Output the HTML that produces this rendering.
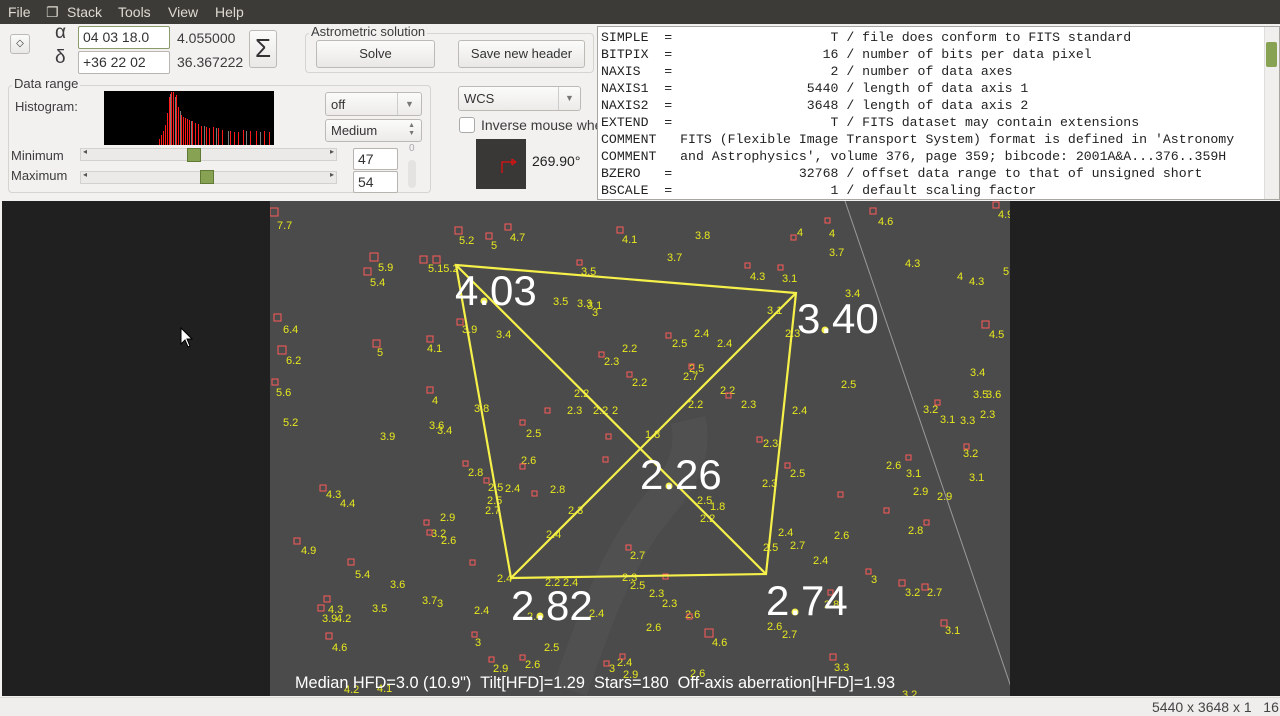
<!DOCTYPE html>
<html><head><meta charset="utf-8"><style>
*{margin:0;padding:0;box-sizing:border-box}
body{width:1280px;height:716px;overflow:hidden;background:#f2f1f0;font-family:"Liberation Sans","DejaVu Sans",sans-serif;font-size:13px;color:#3c3c3c;position:relative}
.a{position:absolute}
.menu{left:0;top:0;width:1280px;height:24px;background:#3c3b37;color:#dfdbd2;font-size:14px}
.menu span{position:absolute;top:4px}
.inp{background:#fff;border:1px solid #b8b5b0;border-radius:2px;font-size:14px;padding:2px 4px;color:#333}
.btn{background:linear-gradient(#fbfbfa,#e9e8e6);border:1px solid #bdbab5;border-radius:3px;text-align:center;font-size:13px;color:#333}
.frame{border:1px solid #d6d4d1;border-radius:4px}
.combo{background:linear-gradient(#fbfbfa,#ecebe9);border:1px solid #bdbab5;border-radius:3px;font-size:13px;padding:4px 5px;color:#333}
.slider{background:#ebeae8;border:1px solid #d3d1ce;height:13px}
.slider:before{content:"◂";position:absolute;left:2px;top:-2px;font-size:8px;color:#555}
.slider:after{content:"▸";position:absolute;right:2px;top:-2px;font-size:8px;color:#555}
.handle{background:#87a252;border:1px solid #5e7a34;width:14px;height:14px}
.fits{left:597px;top:26px;width:683px;height:174px;background:#fff;border:1px solid #a9a6a1;font-family:"Liberation Mono","DejaVu Sans Mono",monospace;font-size:13.2px;line-height:17px;white-space:pre;color:#222;padding:2px 0 0 3px;overflow:hidden}
</style></head><body>
<div class="a menu"><span style="left:8px">File</span><span style="left:46px">&#x2750;</span><span style="left:67px">Stack</span><span style="left:118px">Tools</span><span style="left:168px">View</span><span style="left:215px">Help</span></div>

<div class="a btn" style="left:10px;top:34px;width:20px;height:20px;font-size:10px;line-height:18px">&#x25C7;</div>
<div class="a" style="left:55px;top:22px;font-size:19px">α</div>
<div class="a" style="left:55px;top:47px;font-size:19px">δ</div>
<div class="a inp" style="left:78px;top:26px;width:92px;height:23px;border-color:#8a9c6a">04 03  18.0</div>
<div class="a inp" style="left:78px;top:51px;width:92px;height:23px">+36 22  02</div>
<div class="a" style="left:177px;top:30px;font-size:14px">4.055000</div>
<div class="a" style="left:177px;top:54px;font-size:14px">36.367222</div>
<div class="a btn" style="left:249px;top:30px;width:28px;height:38px;font-size:26px;line-height:34px">Σ</div>

<div class="a frame" style="left:305px;top:33px;width:289px;height:40px"></div>
<div class="a" style="left:309px;top:24px;background:#f2f1f0;padding:0 2px">Astrometric solution</div>
<div class="a btn" style="left:316px;top:40px;width:119px;height:28px;line-height:26px">Solve</div>
<div class="a btn" style="left:458px;top:40px;width:127px;height:28px;line-height:26px">Save new header</div>

<div class="a frame" style="left:8px;top:85px;width:423px;height:108px"></div>
<div class="a" style="left:12px;top:76px;background:#f2f1f0;padding:0 2px">Data range</div>
<div class="a" style="left:15px;top:99px">Histogram:</div>
<svg class="a" style="left:104px;top:91px" width="170" height="54" viewBox="0 0 170 54">
<rect width="170" height="54" fill="#000"/>
<g stroke="#ff1a1a" stroke-width="1">
<path d="M55.5 54V48M57.5 54V44M59.5 54V40M61.5 54V34M63.5 54V22M65.5 54V6M67.5 54V1M69.5 54V1M72.5 54V4M74.5 54V16M77.5 54V24M79.5 54V26M81.5 54V27M83.5 54V28M85.5 54V29M88.5 54V30M91.5 54V32M94.5 54V33M97.5 54V35M102.5 54V36M105.5 54V37M109.5 54V36M114.5 54V37M118.5 54V39M126.5 54V40M130.5 54V41M134.5 54V41M139.5 54V39M146.5 54V40M152.5 54V40M160.5 54V40M165.5 54V41"/>
</g>
<g stroke="#999" stroke-width="0.8"><path d="M66.5 54V3M71.5 54V6M76.5 54V20M87.5 54V30M100.5 54V35M112.5 54V37M124.5 54V40M142.5 54V40M156.5 54V41"/></g>
</svg>
<div class="a combo" style="left:325px;top:92px;width:97px;height:24px">off<span style="position:absolute;right:0;top:0;width:24px;height:22px;border-left:1px solid #ccc;text-align:center;font-size:9px;line-height:22px;color:#777">▼</span></div>
<div class="a combo" style="left:325px;top:119px;width:97px;height:23px;padding-top:3px">Medium<span style="position:absolute;right:6px;top:2px;font-size:7px;line-height:8px;color:#777">▲<br>▼</span></div>
<div class="a" style="left:11px;top:148px">Minimum</div>
<div class="a" style="left:11px;top:168px">Maximum</div>
<div class="a slider" style="left:80px;top:148px;width:257px"></div>
<div class="a slider" style="left:80px;top:171px;width:257px"></div>
<div class="a handle" style="left:187px;top:148px"></div>
<div class="a handle" style="left:200px;top:170px"></div>
<div class="a inp" style="left:353px;top:148px;width:45px;height:22px">47</div>
<div class="a inp" style="left:353px;top:171px;width:45px;height:22px">54</div>
<div class="a" style="left:409px;top:143px;font-size:10px;color:#aaa">0</div>
<div class="a" style="left:408px;top:160px;width:8px;height:28px;background:#e4e3e1;border-radius:4px"></div>

<div class="a combo" style="left:458px;top:86px;width:123px;height:25px">WCS<span style="position:absolute;right:0;top:0;width:22px;height:23px;border-left:1px solid #ccc;text-align:center;font-size:9px;line-height:23px;color:#777">▼</span></div>
<div class="a" style="left:459px;top:117px;width:16px;height:16px;background:#fff;border:1px solid #aaa;border-radius:3px"></div>
<div class="a" style="left:481px;top:117px;font-size:14px;width:116px;overflow:hidden;white-space:nowrap">Inverse mouse wheel</div>
<svg class="a" style="left:476px;top:139px" width="50" height="50"><rect width="50" height="50" fill="#3a3836"/><path d="M26 34V23H40M36 20V26" stroke="#e01010" stroke-width="1.3" fill="none"/><path d="M36 20L40 23L36 26" stroke="#e01010" fill="none"/></svg>
<div class="a" style="left:532px;top:153px;font-size:14px;color:#222">269.90°</div>

<div class="a fits">SIMPLE  =                    T / file does conform to FITS standard
BITPIX  =                   16 / number of bits per data pixel
NAXIS   =                    2 / number of data axes
NAXIS1  =                 5440 / length of data axis 1
NAXIS2  =                 3648 / length of data axis 2
EXTEND  =                    T / FITS dataset may contain extensions
COMMENT   FITS (Flexible Image Transport System) format is defined in 'Astronomy
COMMENT   and Astrophysics', volume 376, page 359; bibcode: 2001A&amp;A...376..359H
BZERO   =                32768 / offset data range to that of unsigned short
BSCALE  =                    1 / default scaling factor</div>
<div class="a" style="left:1264px;top:27px;width:15px;height:172px;background:#f0efed;border-left:1px solid #ddd"></div>
<div class="a" style="left:1266px;top:42px;width:11px;height:25px;background:#87a252;border-radius:2px"></div>

<div class="a" style="left:0;top:200px;width:1280px;height:497px;background:#f2f1f0"></div>
<div class="a" style="left:2px;top:201px;width:1278px;height:495px;background:#202020"></div>
<svg class="a" style="left:270px;top:201px" width="740" height="495" viewBox="270 201 740 495" font-family="Liberation Sans, DejaVu Sans, sans-serif">
<rect x="270" y="201" width="740" height="495" fill="#4b4b4b"/>
<path d="M570 690C595 620 615 560 655 510C685 475 695 450 688 420" stroke="#555" stroke-width="35" fill="none" opacity="0.5"/>
<path d="M845 201L1012 690" stroke="#9a9a9a" stroke-width="1"/>
<g fill="#e8e81e" font-size="11">
<text x="277" y="229">7.7</text><text x="459" y="244">5.2</text><text x="491" y="249">5</text><text x="510" y="241">4.7</text><text x="622" y="243">4.1</text><text x="695" y="239">3.8</text><text x="797" y="236">4</text><text x="829" y="237">4</text><text x="878" y="225">4.6</text><text x="998" y="218">4.9</text><text x="667" y="261">3.7</text><text x="829" y="256">3.7</text><text x="378" y="271">5.9</text><text x="370" y="286">5.4</text><text x="428" y="272">5.15.2</text><text x="581" y="275">3.5</text><text x="750" y="280">4.3</text><text x="782" y="282">3.1</text><text x="905" y="267">4.3</text><text x="957" y="280">4</text><text x="969" y="285">4.3</text><text x="1003" y="275">5</text><text x="845" y="297">3.4</text><text x="553" y="305">3.5</text><text x="577" y="307">3.3</text><text x="587" y="309">3.1</text><text x="592" y="316">3</text><text x="767" y="314">3.1</text><text x="283" y="333">6.4</text><text x="462" y="333">3.9</text><text x="496" y="338">3.4</text><text x="694" y="337">2.4</text><text x="717" y="347">2.4</text><text x="785" y="337">2.3</text><text x="989" y="338">4.5</text><text x="427" y="352">4.1</text><text x="377" y="356">5</text><text x="286" y="364">6.2</text><text x="604" y="365">2.3</text><text x="622" y="352">2.2</text><text x="672" y="347">2.5</text><text x="689" y="372">2.5</text><text x="683" y="380">2.7</text><text x="632" y="386">2.2</text><text x="720" y="394">2.2</text><text x="741" y="408">2.3</text><text x="841" y="388">2.5</text><text x="276" y="396">5.6</text><text x="432" y="404">4</text><text x="970" y="376">3.4</text><text x="986" y="398">3.6</text><text x="973" y="398">3.5</text><text x="574" y="397">2.2</text><text x="567" y="414">2.3</text><text x="593" y="414">2.2</text><text x="612" y="414">2</text><text x="688" y="408">2.2</text><text x="792" y="414">2.4</text><text x="923" y="413">3.2</text><text x="940" y="423">3.1</text><text x="960" y="424">3.3</text><text x="980" y="418">2.3</text><text x="283" y="426">5.2</text><text x="474" y="412">3.8</text><text x="429" y="429">3.6</text><text x="437" y="434">3.4</text><text x="380" y="440">3.9</text><text x="526" y="437">2.5</text><text x="645" y="438">1.8</text><text x="763" y="447">2.3</text><text x="963" y="457">3.2</text><text x="521" y="464">2.6</text><text x="886" y="469">2.6</text><text x="906" y="477">3.1</text><text x="969" y="481">3.1</text><text x="468" y="476">2.8</text><text x="488" y="491">2.5</text><text x="505" y="492">2.4</text><text x="550" y="493">2.8</text><text x="790" y="477">2.5</text><text x="762" y="487">2.3</text><text x="487" y="504">2.5</text><text x="913" y="495">2.9</text><text x="937" y="500">2.9</text><text x="326" y="498">4.3</text><text x="340" y="507">4.4</text><text x="485" y="514">2.7</text><text x="568" y="514">2.3</text><text x="697" y="504">2.5</text><text x="710" y="510">1.8</text><text x="700" y="522">2.2</text><text x="440" y="521">2.9</text><text x="908" y="534">2.8</text><text x="431" y="537">3.2</text><text x="441" y="544">2.6</text><text x="546" y="538">2.4</text><text x="778" y="536">2.4</text><text x="834" y="539">2.6</text><text x="790" y="549">2.7</text><text x="301" y="554">4.9</text><text x="763" y="551">2.5</text><text x="813" y="564">2.4</text><text x="630" y="559">2.7</text><text x="355" y="578">5.4</text><text x="390" y="588">3.6</text><text x="497" y="582">2.4</text><text x="545" y="586">2.2</text><text x="563" y="586">2.4</text><text x="622" y="581">2.3</text><text x="630" y="589">2.5</text><text x="649" y="597">2.3</text><text x="662" y="607">2.3</text><text x="871" y="583">3</text><text x="905" y="596">3.2</text><text x="927" y="596">2.7</text><text x="372" y="612">3.5</text><text x="422" y="604">3.7</text><text x="437" y="607">3</text><text x="474" y="614">2.4</text><text x="322" y="622">3.9</text><text x="336" y="622">4.2</text><text x="328" y="613">4.3</text><text x="589" y="617">2.4</text><text x="685" y="618">2.6</text><text x="646" y="631">2.6</text><text x="767" y="630">2.6</text><text x="782" y="638">2.7</text><text x="332" y="651">4.6</text><text x="945" y="634">3.1</text><text x="475" y="646">3</text><text x="712" y="646">4.6</text><text x="544" y="651">2.5</text><text x="525" y="668">2.6</text><text x="493" y="672">2.9</text><text x="617" y="666">2.4</text><text x="609" y="672">3</text><text x="623" y="678">2.9</text><text x="690" y="677">2.6</text><text x="834" y="671">3.3</text><text x="344" y="693">4.2</text><text x="377" y="692">4.1</text><text x="902" y="698">3.2</text><text x="824" y="608">2.8</text><text x="527" y="620">2.4</text>
</g>
<g fill="none" stroke="#ff5a5a" stroke-width="1">
<rect x="270" y="208" width="8" height="8"/><rect x="455" y="227" width="7" height="7"/><rect x="486" y="233" width="6" height="6"/><rect x="505" y="224" width="6" height="6"/><rect x="617" y="227" width="6" height="6"/><rect x="370" y="253" width="8" height="8"/><rect x="364" y="268" width="7" height="7"/><rect x="420" y="256" width="7" height="7"/><rect x="433" y="256" width="7" height="7"/><rect x="577" y="260" width="5" height="5"/><rect x="274" y="314" width="7" height="7"/><rect x="278" y="346" width="8" height="8"/><rect x="272" y="379" width="6" height="6"/><rect x="373" y="340" width="7" height="7"/><rect x="427" y="336" width="6" height="6"/><rect x="427" y="387" width="6" height="6"/><rect x="457" y="319" width="6" height="6"/><rect x="791" y="235" width="5" height="5"/><rect x="825" y="218" width="5" height="5"/><rect x="870" y="208" width="6" height="6"/><rect x="993" y="202" width="6" height="6"/><rect x="745" y="263" width="5" height="5"/><rect x="778" y="265" width="5" height="5"/><rect x="982" y="321" width="7" height="7"/><rect x="320" y="485" width="6" height="6"/><rect x="294" y="538" width="6" height="6"/><rect x="348" y="559" width="6" height="6"/><rect x="318" y="605" width="6" height="6"/><rect x="324" y="596" width="6" height="6"/><rect x="326" y="633" width="6" height="6"/><rect x="705" y="629" width="8" height="8"/><rect x="830" y="654" width="6" height="6"/><rect x="899" y="580" width="6" height="6"/><rect x="922" y="584" width="6" height="6"/><rect x="941" y="620" width="6" height="6"/><rect x="470" y="560" width="5" height="5"/><rect x="603" y="457" width="5" height="5"/><rect x="520" y="464" width="5" height="5"/><rect x="785" y="463" width="5" height="5"/><rect x="757" y="437" width="5" height="5"/><rect x="606" y="434" width="5" height="5"/><rect x="520" y="420" width="5" height="5"/><rect x="545" y="408" width="5" height="5"/><rect x="627" y="372" width="5" height="5"/><rect x="599" y="352" width="5" height="5"/><rect x="666" y="333" width="5" height="5"/><rect x="689" y="364" width="5" height="5"/><rect x="726" y="393" width="5" height="5"/><rect x="463" y="461" width="5" height="5"/><rect x="484" y="478" width="5" height="5"/><rect x="906" y="455" width="5" height="5"/><rect x="935" y="400" width="5" height="5"/><rect x="964" y="444" width="5" height="5"/><rect x="884" y="508" width="5" height="5"/><rect x="838" y="492" width="5" height="5"/><rect x="866" y="569" width="5" height="5"/><rect x="532" y="491" width="5" height="5"/><rect x="626" y="545" width="5" height="5"/><rect x="663" y="574" width="5" height="5"/><rect x="687" y="614" width="5" height="5"/><rect x="489" y="657" width="5" height="5"/><rect x="520" y="655" width="5" height="5"/><rect x="472" y="632" width="5" height="5"/><rect x="620" y="654" width="5" height="5"/><rect x="604" y="661" width="5" height="5"/><rect x="424" y="520" width="5" height="5"/><rect x="427" y="530" width="5" height="5"/><rect x="924" y="520" width="5" height="5"/><rect x="828" y="590" width="5" height="5"/></g>
<g fill="none" stroke="#f5f04a" stroke-width="2.2">
<path d="M456 265L796 293L766 574L511 578Z"/><path d="M456 265L766 574M796 293L511 578"/>
</g>
<g fill="#f5f04a"><circle cx="484" cy="301" r="3.5"/><circle cx="825" cy="330" r="3.5"/><circle cx="669" cy="486" r="3.5"/><circle cx="540" cy="616" r="3.5"/><circle cx="795" cy="612" r="3.5"/></g>
<g fill="#fff" font-size="42">
<text x="455" y="305">4.03</text><text x="797" y="333">3.40</text><text x="640" y="489">2.26</text><text x="511" y="620">2.82</text><text x="766" y="615">2.74</text>
</g>
<text x="295" y="688" fill="#fff" font-size="16.3" style="white-space:pre" xml:space="preserve">Median HFD=3.0 (10.9")  Tilt[HFD]=1.29  Stars=180  Off-axis aberration[HFD]=1.93</text>
</svg>
<svg class="a" style="left:180px;top:327px" width="14" height="22"><path d="M1 1V17L5 13L8 20L10 19L7 12L12 12Z" fill="#fff" stroke="#000" stroke-width="1"/></svg>

<div class="a" style="left:0;top:697px;width:1280px;height:19px;background:#efeeec;border-top:1px solid #dcdad5"></div>
<div class="a" style="left:1152px;top:699px;font-size:14px;color:#444;white-space:pre">5440 x 3648 x 1   16</div>
</body></html>
